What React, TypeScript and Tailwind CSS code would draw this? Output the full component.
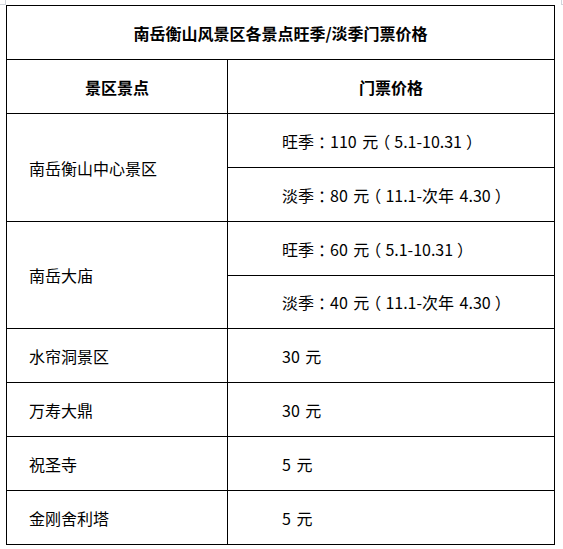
import React from "react";

const font = { fontFamily: '"Noto Sans CJK SC", "Noto Sans", sans-serif' };

function P({ c }: { c: string }) {
  return (
    <span className="inline-block w-[16px] text-center [font-feature-settings:'halt']">{c}</span>
  );
}

function Price({ season, price, range }: { season: string; price: string; range: string }) {
  return (
    <span className="flex items-center whitespace-pre">
      {season}
      <P c="：" />
      {price} 元
      <P c="（" />
      {range}
      <P c="）" />
    </span>
  );
}

function Row({ left, right }: { left: React.ReactNode; right: React.ReactNode }) {
  return (
    <div className="flex h-[54px]">
      <div className="w-[221px] shrink-0 border-l border-t border-black flex items-center pl-[22px]">
        {left}
      </div>
      <div className="flex-1 border-l border-t border-black flex items-center pl-[54px] [word-spacing:2px]">
        {right}
      </div>
    </div>
  );
}

export default function App() {
  return (
    <div className="relative w-[563px] h-[549px] bg-white text-black text-[16px] leading-none" style={font}>
      <span className="absolute left-0 top-[4px] w-[5px] h-px bg-gray-300" />
      <span className="absolute left-[5px] top-0 w-px h-[5px] bg-gray-300" />
      <span className="absolute left-[561px] top-0 w-px h-[5px] bg-gray-300" />
      <span className="absolute left-[561px] top-[4px] w-[2px] h-px bg-gray-300" />

      <div className="absolute left-[6px] top-[5px] w-[549px] border-r border-b border-black">
        <div className="h-[54px] border-l border-t border-black flex items-center justify-center font-bold">
          南岳衡山风景区各景点旺季/淡季门票价格
        </div>
        <div className="flex h-[54px] font-bold">
          <div className="w-[221px] shrink-0 border-l border-t border-black flex items-center justify-center">
            景区景点
          </div>
          <div className="flex-1 border-l border-t border-black flex items-center justify-center">
            门票价格
          </div>
        </div>

        <div className="flex h-[108px]">
          <div className="w-[221px] shrink-0 border-l border-t border-black flex items-center pl-[22px]">
            南岳衡山中心景区
          </div>
          <div className="flex-1 flex flex-col [word-spacing:2px]">
            <div className="h-[54px] border-l border-t border-black flex items-center pl-[54px]">
              <Price season="旺季" price="110" range="5.1-10.31" />
            </div>
            <div className="h-[54px] border-l border-t border-black flex items-center pl-[54px]">
              <Price season="淡季" price="80" range="11.1-次年 4.30" />
            </div>
          </div>
        </div>

        <div className="flex h-[107px]">
          <div className="w-[221px] shrink-0 border-l border-t border-black flex items-center pl-[22px]">
            南岳大庙
          </div>
          <div className="flex-1 flex flex-col [word-spacing:2px]">
            <div className="h-[54px] border-l border-t border-black flex items-center pl-[54px]">
              <Price season="旺季" price="60" range="5.1-10.31" />
            </div>
            <div className="h-[53px] border-l border-t border-black flex items-center pl-[54px]">
              <Price season="淡季" price="40" range="11.1-次年 4.30" />
            </div>
          </div>
        </div>

        <Row left="水帘洞景区" right="30 元" />
        <Row left="万寿大鼎" right="30 元" />
        <Row left="祝圣寺" right="5 元" />
        <Row left="金刚舍利塔" right="5 元" />
      </div>
    </div>
  );
}
